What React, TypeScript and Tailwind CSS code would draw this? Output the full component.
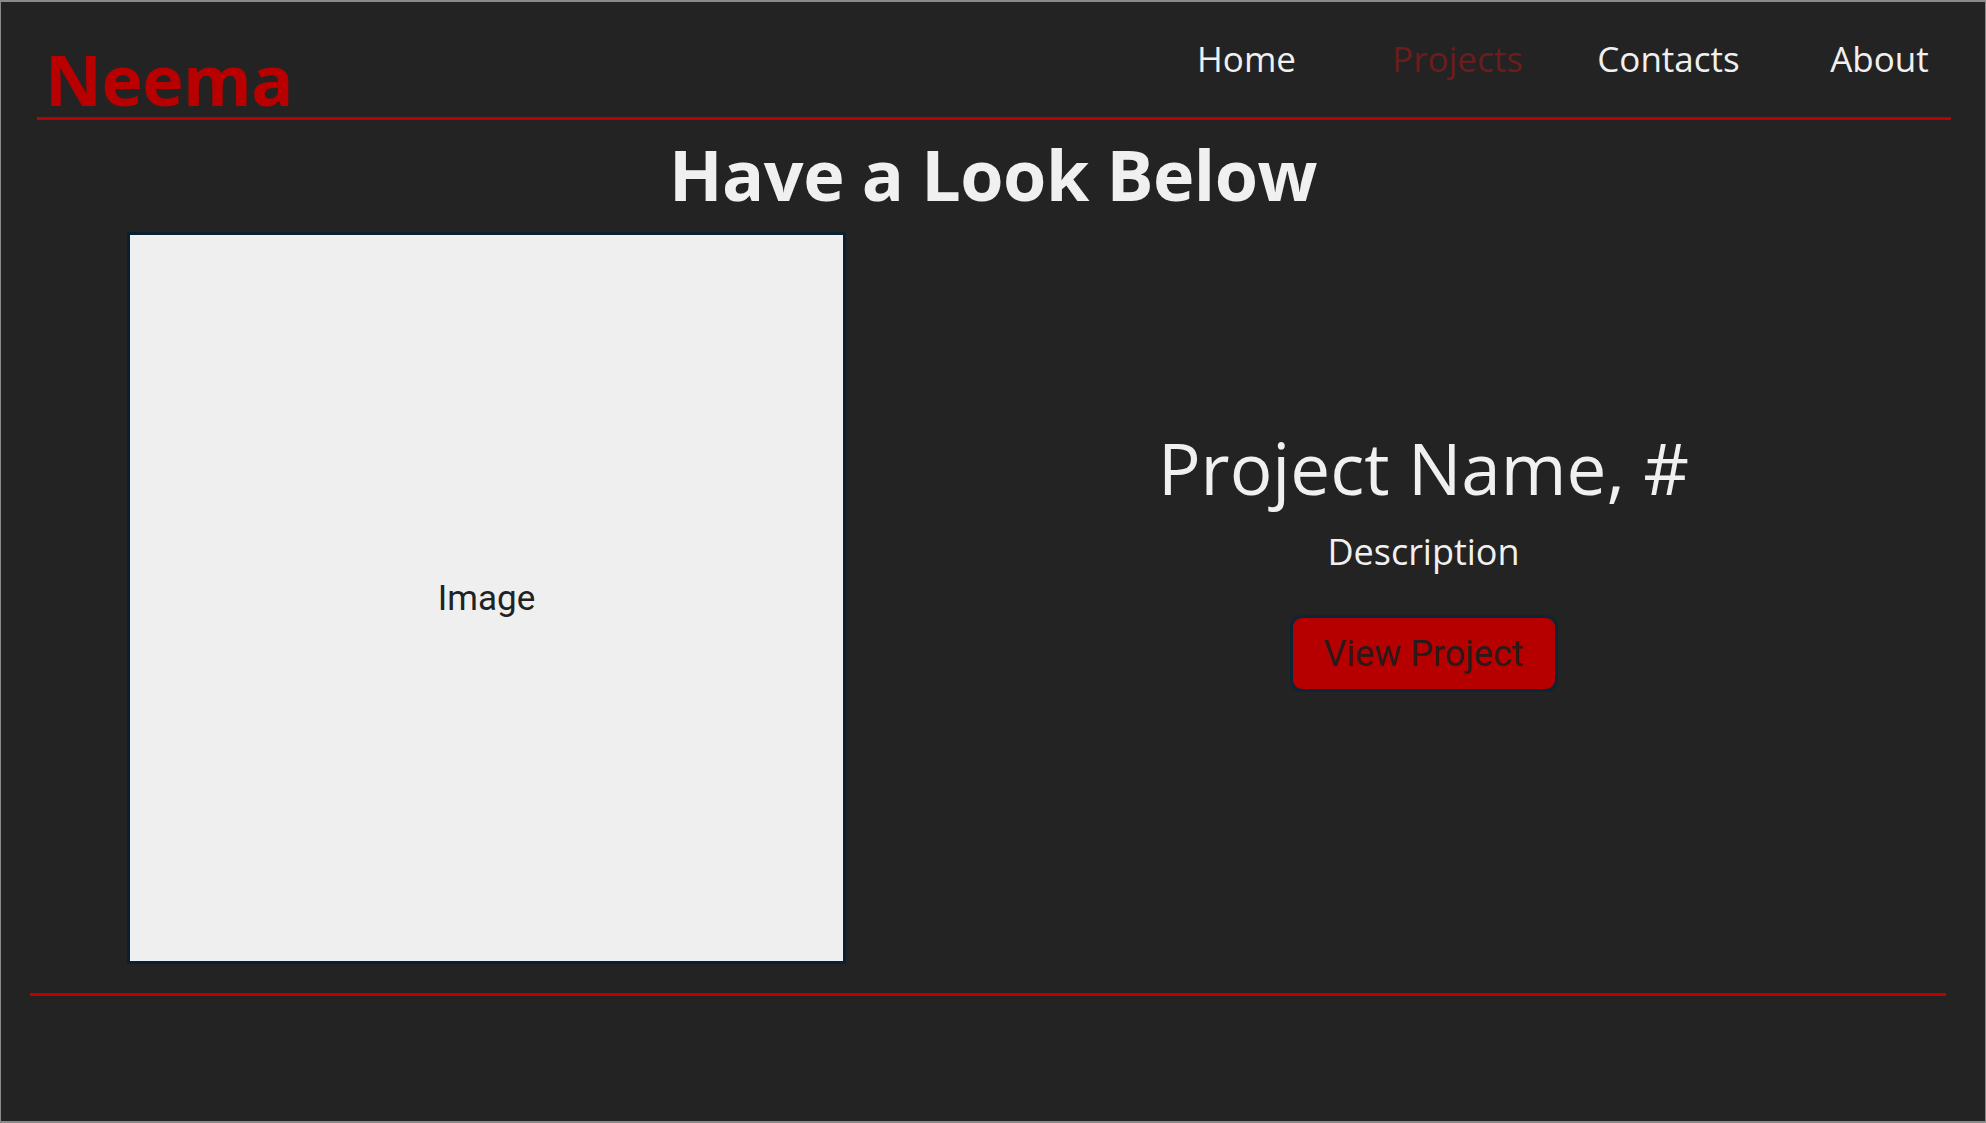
export default function App() {
  const links = ["Home", "Projects", "Contacts", "About"];

  return (
    <div className="w-full h-[1123px] bg-[#232323] border-t-2 border-b-2 border-x border-[#8a8a8a] font-['Open_Sans',sans-serif] text-[#f0f0f0] overflow-hidden">
      <header className="flex items-start">
        <h1 className="ml-[44px] mt-[42px] text-[70px] leading-none font-bold tracking-[-0.5px] text-[#b80000]">
          Neema
        </h1>
        <nav className="ml-auto mt-[39px] flex">
          {links.map((l) => (
            <a
              key={l}
              href="#"
              className={
                l === "Projects"
                  ? "w-[211px] text-center text-[35px] leading-none text-[#6b1c1c]"
                  : "w-[211px] text-center text-[35px] leading-none"
              }
            >
              {l}
            </a>
          ))}
        </nav>
      </header>
      <div className="mt-[3px] ml-[36px] mr-[34px] h-[3px] bg-[#bf0000]" />

      <h2 className="mt-[19px] text-center text-[70px] leading-none font-bold tracking-[-0.5px]">
        Have a Look Below
      </h2>

      <section className="mt-[23px] flex">
        <div className="ml-[126px] w-[719px] h-[732px] shrink-0 border-[3px] border-[#08202f] bg-[#efefef] flex items-center justify-center">
          <span className="font-['Roboto',sans-serif] text-[35px] leading-none text-[#222]">
            Image
          </span>
        </div>
        <div className="ml-[16px] flex-1 flex flex-col items-center pt-[200px]">
          <h3 className="text-[71px] leading-none">Project Name, #</h3>
          <p className="mt-[31px] text-[36px] leading-none">Description</p>
          <button className="mt-[45px] w-[268px] h-[77px] rounded-[12px] border-[3px] border-[#0b2535] bg-[#b60000] font-['Roboto',sans-serif] text-[36px] leading-none text-[#2a1a1a]">
            View Project
          </button>
        </div>
      </section>

      <div className="mt-[29px] ml-[29px] mr-[39px] h-[3px] bg-[#bf0000]" />
    </div>
  );
}
